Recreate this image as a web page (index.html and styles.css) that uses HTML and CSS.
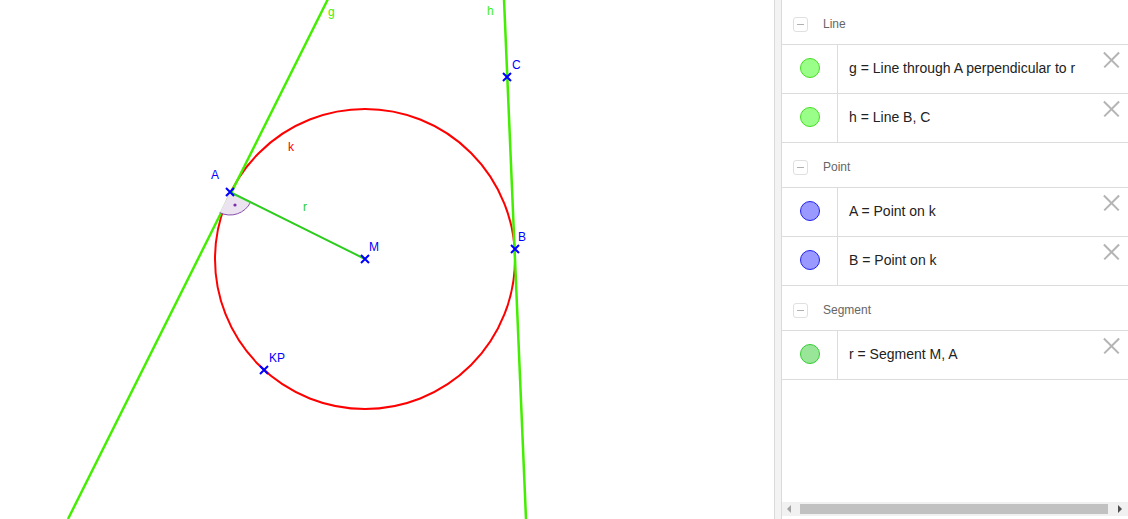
FILE: index.html
```html
<!DOCTYPE html>
<html>
<head>
<meta charset="utf-8">
<link rel="stylesheet" href="styles.css">
</head>
<body>
<div class="app">
  <div class="canvas">
    <svg width="774" height="519" viewBox="0 0 774 519">
      <circle cx="365" cy="259" r="150" fill="none" stroke="#ff0000" stroke-width="2"/>
      <line x1="68" y1="519" x2="328" y2="-1" stroke="#44ee00" stroke-width="2.5"/>
      <line x1="504" y1="-1" x2="526" y2="519" stroke="#44ee00" stroke-width="2.5"/>
      <path d="M230 192 L250.6 202.2 A23 23 0 0 1 219.7 212.6 Z" fill="#ebe3f0" stroke="none"/>
      <path d="M250.6 202.2 A23 23 0 0 1 219.7 212.6" fill="none" stroke="#8a4fb0" stroke-width="1"/>
      <circle cx="235" cy="205" r="1.6" fill="#7a2fa8"/>
      <line x1="365" y1="259" x2="230" y2="192" stroke="#2ecc1e" stroke-width="2"/>
      <g stroke="#0000ff" stroke-width="2" stroke-linecap="butt">
        <path d="M226 188 L234 196 M234 188 L226 196"/>
        <path d="M361 255 L369 263 M369 255 L361 263"/>
        <path d="M511 245 L519 253 M519 245 L511 253"/>
        <path d="M503 73 L511 81 M511 73 L503 81"/>
        <path d="M260 366 L268 374 M268 366 L260 374"/>
      </g>
      <g class="lbl">
        <text x="328" y="16" fill="#44ee00">g</text>
        <text x="487" y="15" fill="#44ee00">h</text>
        <text x="512" y="69" fill="#0000ff">C</text>
        <text x="288" y="151" fill="#ff0000">k</text>
        <text x="211" y="179" fill="#0000ff">A</text>
        <text x="303" y="211" fill="#2ecc1e">r</text>
        <text x="369" y="251" fill="#0000ff">M</text>
        <text x="518" y="241" fill="#0000ff">B</text>
        <text x="269" y="362" fill="#0000ff">KP</text>
      </g>
    </svg>
  </div>
  <div class="splitter"></div>
  <div class="panel">
    <div class="list">
      <div class="group">
        <div class="ghead"><span class="collapse"></span><span class="gname">Line</span></div>
        <div class="row">
          <div class="icell"><span class="dot dot-line"></span></div>
          <div class="tcell">g = Line through A perpendicular to r</div>
          <span class="del"></span>
        </div>
        <div class="row">
          <div class="icell"><span class="dot dot-line"></span></div>
          <div class="tcell">h = Line B, C</div>
          <span class="del"></span>
        </div>
      </div>
      <div class="group">
        <div class="ghead"><span class="collapse"></span><span class="gname">Point</span></div>
        <div class="row">
          <div class="icell"><span class="dot dot-point"></span></div>
          <div class="tcell">A = Point on k</div>
          <span class="del"></span>
        </div>
        <div class="row">
          <div class="icell"><span class="dot dot-point"></span></div>
          <div class="tcell">B = Point on k</div>
          <span class="del"></span>
        </div>
      </div>
      <div class="group">
        <div class="ghead"><span class="collapse"></span><span class="gname">Segment</span></div>
        <div class="row">
          <div class="icell"><span class="dot dot-seg"></span></div>
          <div class="tcell">r = Segment M, A</div>
          <span class="del"></span>
        </div>
      </div>
    </div>
    <div class="hscroll">
      <span class="arr arr-l"></span>
      <span class="thumb"></span>
      <span class="arr arr-r"></span>
    </div>
  </div>
</div>
</body>
</html>
```
FILE: styles.css
```css
html, body {
  margin: 0;
  padding: 0;
  background: #fff;
  overflow: hidden;
}
.app {
  display: flex;
  width: 1128px;
  height: 519px;
  font-family: "Liberation Sans", Arial, sans-serif;
}
.canvas {
  width: 774px;
  height: 519px;
  flex: none;
}
.canvas svg {
  display: block;
}
.lbl text {
  font-family: "Liberation Sans", Arial, sans-serif;
  font-size: 12px;
}
.splitter {
  width: 6px;
  flex: none;
  background: #f3f3f3;
  border-left: 1px solid #dadada;
  border-right: 1px solid #dadada;
}
.panel {
  flex: 1;
  display: flex;
  flex-direction: column;
  min-width: 0;
}
.list {
  flex: 1;
}
.group {
  border-bottom: 1px solid #dcdcdc;
}
.ghead {
  height: 44px;
  display: flex;
  align-items: center;
  padding-left: 11px;
  box-sizing: border-box;
  padding-top: 5px;
}
.collapse {
  width: 13px;
  height: 13px;
  border: 1px solid #e0e0e0;
  border-radius: 3px;
  position: relative;
  flex: none;
}
.collapse::after {
  content: "";
  position: absolute;
  left: 3px;
  top: 6px;
  width: 7px;
  height: 1px;
  background: #b0b0b0;
}
.gname {
  margin-left: 15px;
  font-size: 12px;
  color: #666;
  margin-top: -2px;
}
.row {
  height: 48px;
  border-top: 1px solid #dcdcdc;
  display: flex;
  position: relative;
}
.icell {
  width: 56px;
  border-right: 1px solid #dcdcdc;
  display: flex;
  align-items: center;
  justify-content: center;
  padding-bottom: 3px;
  box-sizing: border-box;
  flex: none;
}
.dot {
  width: 20px;
  height: 20px;
  border-radius: 50%;
  box-sizing: border-box;
}
.dot-line {
  background: #99ff88;
  border: 1px solid #44dd22;
}
.dot-point {
  background: #9999ff;
  border: 1px solid #2222ee;
}
.dot-seg {
  background: #99e699;
  border: 1px solid #33cc33;
}
.tcell {
  display: flex;
  align-items: center;
  padding-left: 11px;
  padding-bottom: 3px;
  font-size: 14px;
  color: #222;
  white-space: nowrap;
}
.del {
  position: absolute;
  right: 8px;
  top: 6px;
  width: 17px;
  height: 17px;
}
.del::before, .del::after {
  content: "";
  position: absolute;
  left: -2px;
  top: 8px;
  width: 21px;
  height: 1.5px;
  background: #b4b4b4;
  transform: rotate(45deg);
}
.del::after {
  transform: rotate(-45deg);
}
.hscroll {
  height: 14px;
  margin-bottom: 3px;
  background: #f1f1f1;
  display: flex;
  align-items: center;
  flex: none;
}
.thumb {
  height: 10px;
  background: #c1c1c1;
  flex: 1;
}
.arr {
  width: 0;
  height: 0;
  border-top: 4px solid transparent;
  border-bottom: 4px solid transparent;
  flex: none;
}
.arr-l {
  border-right: 4px solid #a3a3a3;
  margin: 0 9px 0 5px;
}
.arr-r {
  border-left: 4px solid #505050;
  margin: 0 6px 0 10px;
}
```
